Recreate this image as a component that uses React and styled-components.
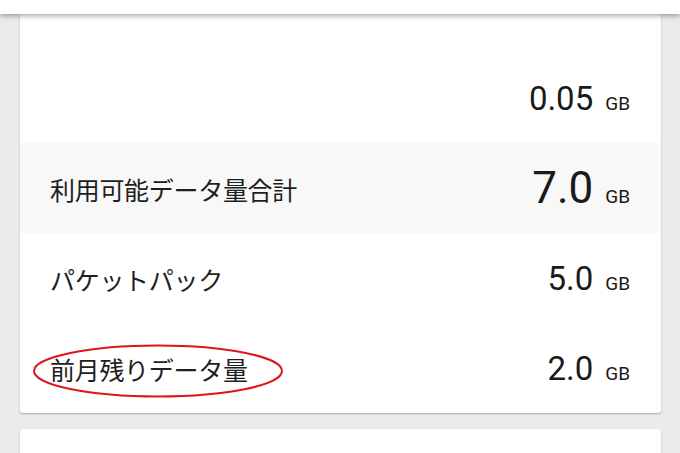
import styled, { createGlobalStyle } from "styled-components";

const GlobalStyle = createGlobalStyle`
  html, body {
    margin: 0;
    padding: 0;
    background: #ebebeb;
    overflow: hidden;
  }
  body {
    font-family: Roboto, "Noto Sans CJK JP", sans-serif;
  }
`;

const Page = styled.div`
  width: 680px;
  height: 453px;
  display: flex;
  flex-direction: column;
  background: #ebebeb;
  overflow: hidden;
`;

const AppBar = styled.header`
  flex: none;
  height: 14px;
  background: #ffffff;
  box-shadow: 0 2px 5px rgba(0, 0, 0, 0.35);
  position: relative;
  z-index: 2;
`;

const Content = styled.main`
  display: flex;
  flex-direction: column;
  gap: 16px;
  padding: 0 19px 0 20px;
`;

const Card = styled.section`
  background: #ffffff;
  border-radius: ${(p) => (p.$flatTop ? "0 0 3px 3px" : "3px")};
  box-shadow: 0 1px 2px rgba(0, 0, 0, 0.28);
  padding-top: ${(p) => p.$padTop || 0}px;
  min-height: ${(p) => p.$minHeight || 0}px;
  display: flex;
  flex-direction: column;
`;

const Row = styled.div`
  position: relative;
  height: 90px;
  display: flex;
  align-items: center;
  justify-content: space-between;
  padding: 0 31px 0 30px;
  background: ${(p) => (p.$highlight ? "#f8f8f8" : "transparent")};
`;

const Label = styled.span`
  font-family: "Noto Sans CJK JP", sans-serif;
  font-size: 25px;
  color: #1f1f1f;
  letter-spacing: -0.3px;
  transform: translateY(1px);
`;

const Value = styled.span`
  display: flex;
  align-items: baseline;
  color: #1a1a1a;
  font-family: Roboto, sans-serif;
`;

const Amount = styled.span`
  font-size: ${(p) => (p.$big ? 44 : 33)}px;
`;

const Unit = styled.span`
  font-size: 19px;
  margin-left: 12px;
`;

const Mark = styled.svg`
  position: absolute;
  left: 11px;
  top: 20px;
  pointer-events: none;
`;

const rows = [
  { label: "", amount: "0.05" },
  { label: "利用可能データ量合計", amount: "7.0", big: true, highlight: true },
  { label: "パケットパック", amount: "5.0" },
  { label: "前月残りデータ量", amount: "2.0", circled: true },
];

export default function App() {
  return (
    <Page>
      <GlobalStyle />
      <AppBar />
      <Content>
        <Card $flatTop $padTop={39}>
          {rows.map((r, i) => (
            <Row key={i} $highlight={r.highlight}>
              <Label>{r.label}</Label>
              <Value>
                <Amount $big={r.big}>{r.amount}</Amount>
                <Unit>GB</Unit>
              </Value>
              {r.circled && (
                <Mark width="254" height="56" viewBox="0 0 254 56">
                  <ellipse
                    cx="127"
                    cy="28"
                    rx="124"
                    ry="25.5"
                    fill="none"
                    stroke="#e0141b"
                    strokeWidth="2"
                  />
                </Mark>
              )}
            </Row>
          ))}
        </Card>
        <Card $minHeight={60} />
      </Content>
    </Page>
  );
}
